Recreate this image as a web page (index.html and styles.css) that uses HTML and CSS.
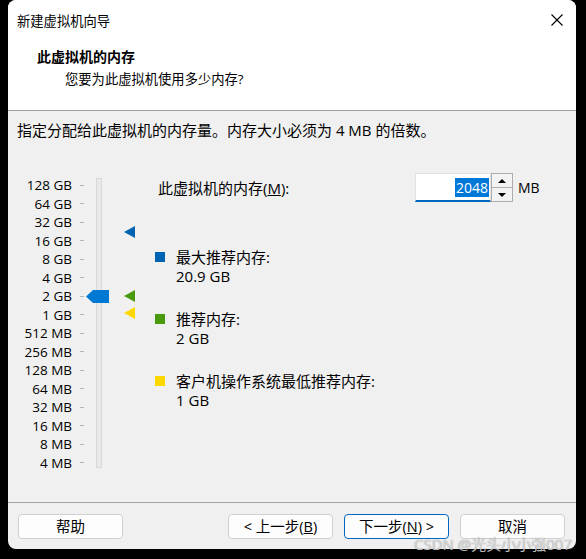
FILE: index.html
```html
<!DOCTYPE html>
<html lang="zh-CN">
<head>
    <meta charset="UTF-8">
    <meta name="viewport" content="width=device-width, initial-scale=1.0">
    <title>新建虚拟机向导</title>
    <link rel="stylesheet" href="styles.css">
</head>
<body>
    <div class="window">
        <div class="top">
            <div class="titlebar">
                <span class="title">新建虚拟机向导</span>
                <svg class="close" width="12" height="12" viewBox="0 0 12 12">
                    <path d="M0.5 0.5 L11.5 11.5 M11.5 0.5 L0.5 11.5" stroke="#000" stroke-width="1.1" fill="none"/>
                </svg>
            </div>
            <div class="heading">此虚拟机的内存</div>
            <div class="subheading">您要为此虚拟机使用多少内存?</div>
        </div>

        <div class="content">
            <p class="intro">指定分配给此虚拟机的内存量。内存大小必须为 4 MB 的倍数。</p>

            <div class="main">
                <div class="slider">
                    <ul class="scale">
                        <li>128 GB</li>
                        <li>64 GB</li>
                        <li>32 GB</li>
                        <li>16 GB</li>
                        <li>8 GB</li>
                        <li>4 GB</li>
                        <li>2 GB</li>
                        <li>1 GB</li>
                        <li>512 MB</li>
                        <li>256 MB</li>
                        <li>128 MB</li>
                        <li>64 MB</li>
                        <li>32 MB</li>
                        <li>16 MB</li>
                        <li>8 MB</li>
                        <li>4 MB</li>
                    </ul>
                    <div class="track"></div>

                    <!-- slider thumb, sits on the 2 GB row -->
                    <svg class="thumb" width="23" height="13" viewBox="0 0 23 13">
                        <polygon points="0,6.5 7,0 23,0 23,13 7,13" fill="#0078d4"/>
                    </svg>

                    <!-- recommendation markers -->
                    <svg class="marker marker-max" width="11" height="12" viewBox="0 0 11 12">
                        <polygon points="0,6 11,0 11,12" fill="#0063b1"/>
                    </svg>
                    <svg class="marker marker-rec" width="11" height="12" viewBox="0 0 11 12">
                        <polygon points="0,6 11,0 11,12" fill="#4a9a10"/>
                    </svg>
                    <svg class="marker marker-min" width="11" height="12" viewBox="0 0 11 12">
                        <polygon points="0,6 11,0 11,12" fill="#ffd800"/>
                    </svg>
                </div>

                <div class="details">
                    <div class="mem-row">
                        <label class="mem-label">此虚拟机的内存(<u>M</u>):</label>
                        <div class="spin-input"><span class="value">2048</span></div>
                        <div class="spin-buttons">
                            <button class="spin-btn">
                                <svg width="8" height="4" viewBox="0 0 8 4"><polygon points="0,4 4,0 8,4" fill="#000"/></svg>
                            </button>
                            <button class="spin-btn">
                                <svg width="8" height="4" viewBox="0 0 8 4"><polygon points="0,0 8,0 4,4" fill="#000"/></svg>
                            </button>
                        </div>
                        <span class="unit">MB</span>
                    </div>

                    <div class="legend">
                        <div class="legend-item">
                            <span class="swatch swatch-max"></span>
                            <div>
                                <div>最大推荐内存:</div>
                                <div>20.9 GB</div>
                            </div>
                        </div>
                        <div class="legend-item">
                            <span class="swatch swatch-rec"></span>
                            <div>
                                <div>推荐内存:</div>
                                <div>2 GB</div>
                            </div>
                        </div>
                        <div class="legend-item">
                            <span class="swatch swatch-min"></span>
                            <div>
                                <div>客户机操作系统最低推荐内存:</div>
                                <div>1 GB</div>
                            </div>
                        </div>
                    </div>
                </div>
            </div>
        </div>

        <div class="footer">
            <button class="btn">帮助</button>
            <div class="nav">
                <button class="btn">&lt; 上一步(<u>B</u>)</button>
                <button class="btn btn-default">下一步(<u>N</u>) &gt;</button>
                <button class="btn">取消</button>
            </div>
        </div>
    </div>

    <div class="watermark">CSDN @光头小小强007</div>
</body>
</html>
```

FILE: styles.css
```css
body {
    margin: 0;
    height: 559px;
    overflow: hidden;
    position: relative;
    background-color: #000;
    color: #000;
    font-family: "Open Sans", "Noto Sans CJK SC", sans-serif;
}

.window {
    margin-left: 8px;
    width: 568px;
    height: 549px;
    background-color: #f0f0f0;
    border-radius: 8px;
    overflow: hidden;
    display: flex;
    flex-direction: column;
}

/* white header with title bar */
.top {
    background-color: #fff;
    height: 111px;
    box-sizing: border-box;
    border-bottom: 1px solid #a0a0a0;
    flex: none;
}

.titlebar {
    height: 40px;
    display: flex;
    align-items: center;
    justify-content: space-between;
    padding: 0 13px 0 9px;
    font-size: 13.3px;
}

.heading {
    margin: 8px 0 0 29px;
    font-size: 14px;
    font-weight: bold;
    line-height: 18px;
}

.subheading {
    margin: 4px 0 0 57px;
    font-size: 13.3px;
    line-height: 18px;
}

/* body of the wizard page */
.content {
    flex: 1;
    padding-left: 9px;
}

.intro {
    margin: 0;
    padding-top: 10px;
    font-size: 15px;
    line-height: 18px;
}

.main {
    display: flex;
    margin-top: 34px;
}

.slider {
    position: relative;
    width: 138px;
    flex: none;
    display: flex;
    align-items: flex-start;
    padding-top: 3px;
}

.scale {
    list-style: none;
    margin: 0;
    padding: 0;
    width: 67px;
    font-size: 13.5px;
}

.scale li {
    height: 18.5px;
    line-height: 18.5px;
    display: flex;
    justify-content: flex-end;
    align-items: center;
    white-space: nowrap;
}

.scale li::after {
    content: "";
    width: 4px;
    height: 1px;
    margin-left: 8px;
    background-color: #b4b4b4;
}

.track {
    margin: 2px 0 0 12px;
    width: 6px;
    height: 290px;
    box-sizing: border-box;
    border: 1px solid #d9d9d9;
    background-color: #e9e9e9;
}

.thumb {
    position: absolute;
    left: 69px;
    top: 117px;
}

.marker {
    position: absolute;
    left: 107px;
}

.marker-max {
    top: 53px;
}

.marker-rec {
    top: 117px;
}

.marker-min {
    top: 134px;
}

/* memory input and legend */
.details {
    display: flex;
    flex-direction: column;
}

.mem-row {
    display: flex;
    align-items: center;
    height: 29px;
}

.mem-label {
    width: 257px;
    padding-left: 3px;
    font-size: 15px;
}

.spin-input {
    width: 76px;
    height: 29px;
    box-sizing: border-box;
    background-color: #fff;
    border: 1px solid #e3e3e3;
    border-bottom: 2px solid #0067c0;
    display: flex;
    align-items: center;
    justify-content: flex-end;
    padding-right: 1px;
}

.value {
    background-color: #0078d7;
    color: #fff;
    font-size: 14px;
    line-height: 19px;
    padding: 0 1px;
}

.spin-buttons {
    display: flex;
    flex-direction: column;
    width: 22px;
    height: 29px;
}

.spin-btn {
    flex: 1;
    padding: 0;
    border: 1px solid #adadad;
    background-color: #f3f3f3;
    display: flex;
    align-items: center;
    justify-content: center;
}

.spin-btn + .spin-btn {
    border-top: none;
}

.unit {
    margin-left: 5px;
    font-size: 14px;
}

.legend {
    margin-top: 46px;
    display: flex;
    flex-direction: column;
    gap: 24px;
}

.legend-item {
    display: flex;
    font-size: 15px;
    line-height: 19px;
}

.swatch {
    flex: none;
    width: 10px;
    height: 10px;
    margin: 4px 11px 0 0;
}

.swatch-max {
    background-color: #0063b1;
}

.swatch-rec {
    background-color: #4a9a10;
}

.swatch-min {
    background-color: #ffd800;
}

/* bottom button bar */
.footer {
    flex: none;
    border-top: 1px solid #a0a0a0;
    padding: 11px 11px 10px 10px;
    display: flex;
    justify-content: space-between;
}

.nav {
    display: flex;
    gap: 11px;
}

.btn {
    width: 105px;
    height: 25px;
    box-sizing: border-box;
    padding: 0;
    border: 1px solid #d0d0d0;
    border-radius: 4px;
    background-color: #fdfdfd;
    color: #000;
    font-family: inherit;
    font-size: 14.5px;
    line-height: 17px;
}

.btn-default {
    border-color: #0067c0;
}

.watermark {
    position: absolute;
    right: 14px;
    top: 539px;
    font-size: 15px;
    line-height: 10px;
    color: rgba(235, 235, 235, 0.8);
    text-shadow: 0 0 1px rgba(0, 0, 0, 0.5);
    white-space: nowrap;
}
```
